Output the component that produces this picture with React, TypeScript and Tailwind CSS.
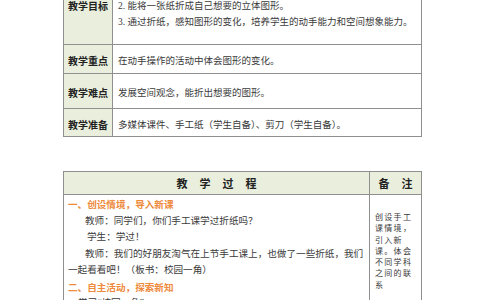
import React from "react";

const serif = { fontFamily: '"Liberation Serif", "Noto Sans CJK SC", serif' };
const sans = { fontFamily: '"Noto Sans CJK SC", "Noto Sans", sans-serif' };

function Row({
  label,
  h,
  children,
  last,
}: {
  label: string;
  h: string;
  children: React.ReactNode;
  last?: boolean;
}) {
  return (
    <div
      className={`flex border-t border-[#8f8f8f] ${h} ${last ? "border-b" : ""}`}
    >
      <div
        className="w-[49px] shrink-0 flex items-center justify-center pt-[4px] bg-[#e9efdc] border-r border-[#8f8f8f] text-[10px] font-bold text-[#222] leading-[16px]"
        style={sans}
      >
        {label}
      </div>
      <div
        className="flex-1 flex flex-col justify-center pt-[4px] pl-[5px] text-[9.5px] text-[#3a3a3a] leading-[16px]"
        style={serif}
      >
        {children}
      </div>
    </div>
  );
}

export default function App() {
  return (
    <div className="w-[484px] h-[300px] overflow-hidden bg-white">
      <div className="ml-[63px] w-[359px] -mt-[38px] border-l border-r border-[#8f8f8f]">
        <Row label="教学目标" h="h-[82px]">
          <div>1. 学会用一张纸折出简单的图形。</div>
          <div>2. 能将一张纸折成自己想要的立体图形。</div>
          <div>3. 通过折纸，感知图形的变化，培养学生的动手能力和空间想象能力。</div>
        </Row>
        <Row label="教学重点" h="h-[29px]">
          <div>在动手操作的活动中体会图形的变化。</div>
        </Row>
        <Row label="教学难点" h="h-[35px]">
          <div>发展空间观念，能折出想要的图形。</div>
        </Row>
        <Row label="教学准备" h="h-[29px]" last>
          <div>多媒体课件、手工纸（学生自备）、剪刀（学生自备）。</div>
        </Row>
      </div>

      <div className="ml-[63px] mt-[34px] w-[359px] border-l border-r border-t border-[#8f8f8f]">
        <div className="flex h-[23px] bg-[#e9efdc] border-b border-[#8f8f8f]">
          <div
            className="w-[306px] shrink-0 flex items-center justify-center gap-[12px] border-r border-[#8f8f8f] text-[11px] font-bold text-[#222]"
            style={sans}
          >
            <span>教</span>
            <span>学</span>
            <span>过</span>
            <span>程</span>
          </div>
          <div
            className="flex-1 flex items-center justify-center gap-[12px] text-[11px] font-bold text-[#222]"
            style={sans}
          >
            <span>备</span>
            <span>注</span>
          </div>
        </div>
        <div className="flex h-[140px]">
          <div
            className="w-[306px] shrink-0 border-r border-[#8f8f8f] pl-[4px] pt-[1px] text-[9.6px] leading-[16.5px] text-[#3a3a3a]"
            style={serif}
          >
            <div className="font-bold text-[#ee8a3c]" style={sans}>
              一、创设情境，导入新课
            </div>
            <div className="pl-[17px]">教师：同学们，你们手工课学过折纸吗？</div>
            <div className="pl-[19px]">学生：学过！</div>
            <div className="pl-[17px]">教师：我们的好朋友淘气在上节手工课上，也做了一些折纸，我们</div>
            <div>一起看看吧！（板书：校园一角）</div>
            <div className="font-bold text-[#ee8a3c]" style={sans}>
              二、自主活动，探索新知
            </div>
            <div className="pl-[10px]">学习“校园一角”</div>
          </div>
          <div
            className="flex-1 pl-[5px] pt-[17px] text-[8px] tracking-[1.3px] leading-[11.3px] text-[#3a3a3a]"
            style={serif}
          >
            <div>创设手工</div>
            <div>课情境，</div>
            <div>引入新</div>
            <div>课。体会</div>
            <div>不同学科</div>
            <div>之间的联</div>
            <div>系</div>
          </div>
        </div>
      </div>
    </div>
  );
}
